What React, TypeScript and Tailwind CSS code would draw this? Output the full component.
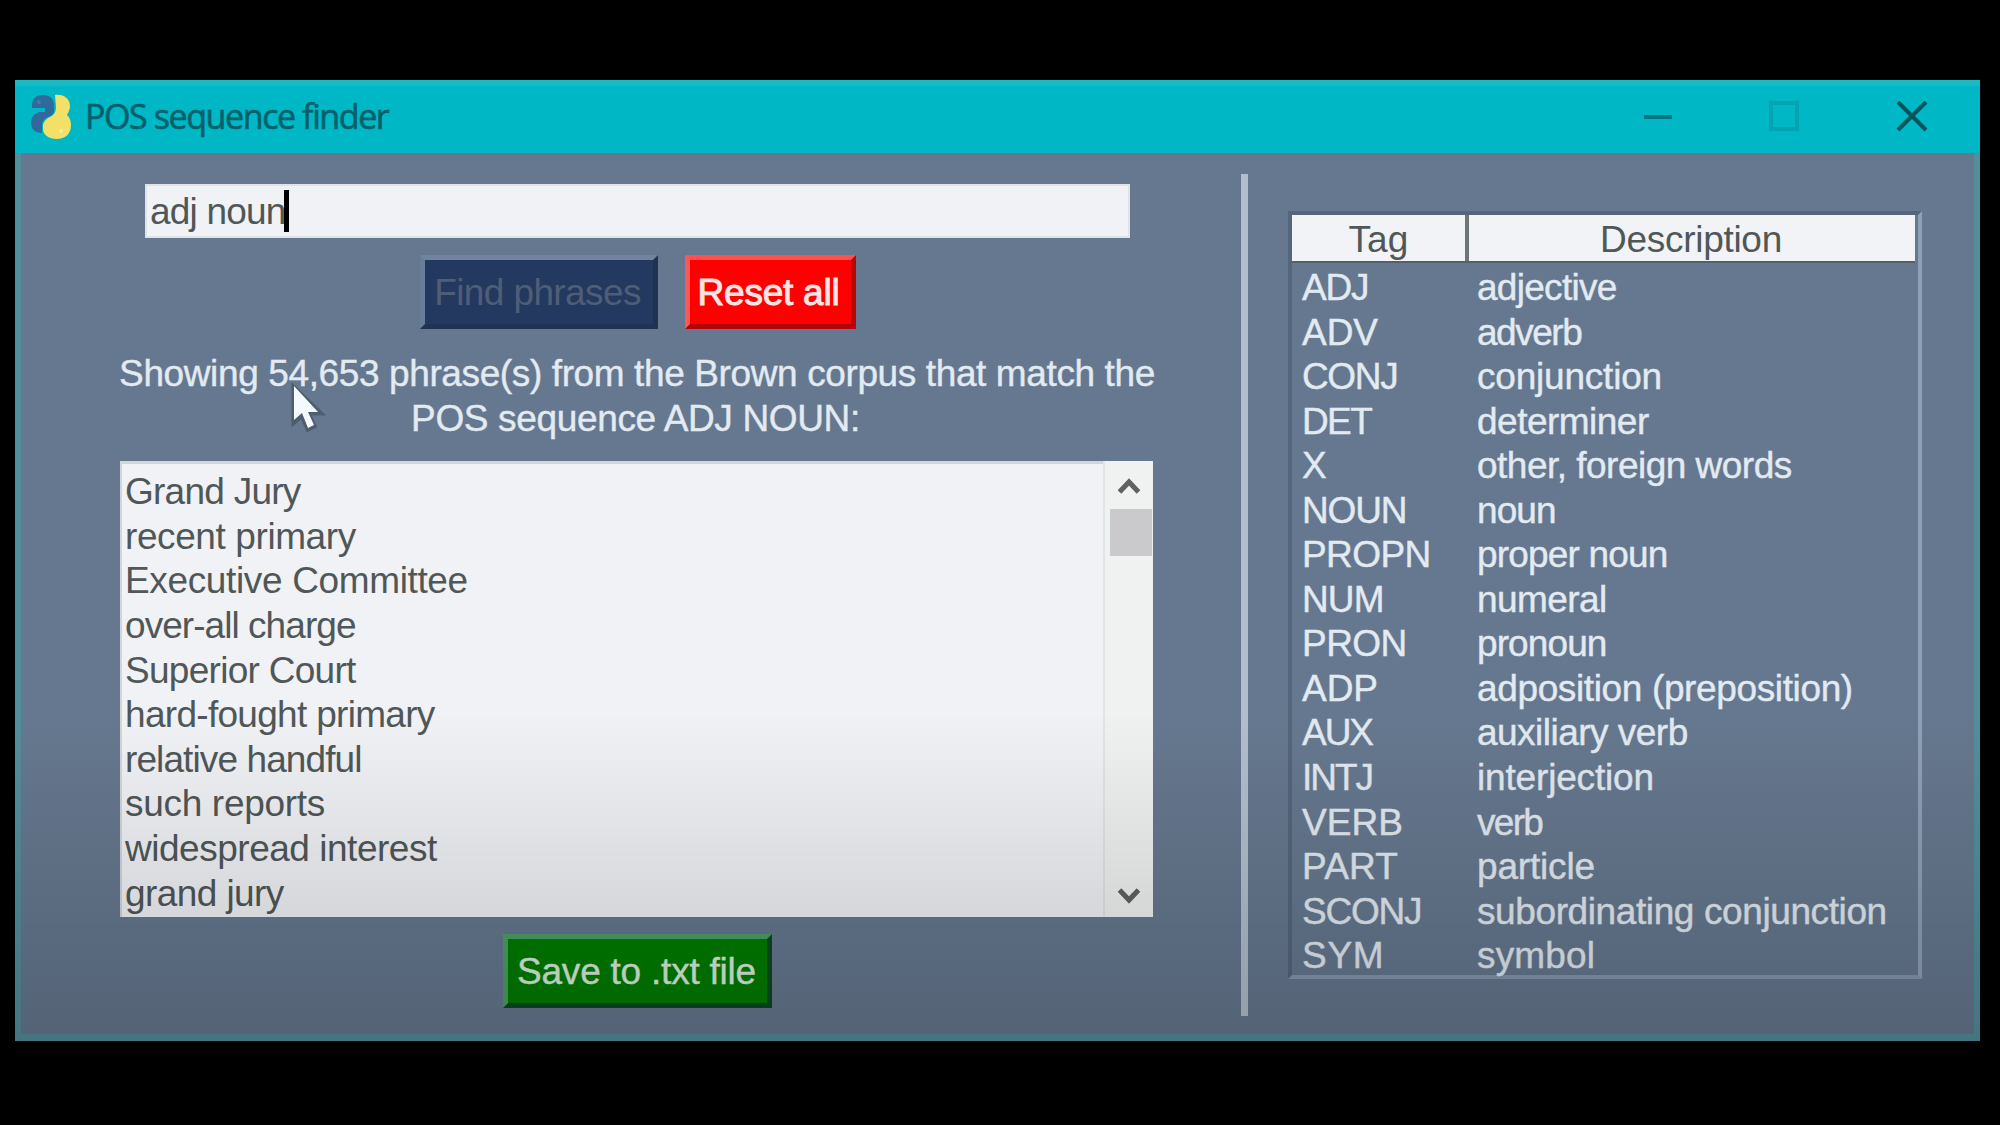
import { useLayoutEffect, useRef, useState } from "react";

type FitProps = { text: string; width: number; className?: string };

// Single line of text tracked in or out so that it fills a given width.
function Fit({ text, width, className = "" }: FitProps) {
  const ref = useRef<HTMLSpanElement>(null);
  const [spacing, setSpacing] = useState(0);
  useLayoutEffect(() => {
    const el = ref.current;
    if (!el) return;
    el.style.letterSpacing = "0px";
    const natural = el.getBoundingClientRect().width;
    const next = text.length > 1 ? (width - natural) / (text.length - 0.5) : 0;
    el.style.letterSpacing = `${next}px`;
    setSpacing(next);
  }, [text, width]);
  return (
    <span ref={ref} className={`inline-block whitespace-pre ${className}`} style={{ letterSpacing: `${spacing}px` }}>
      {text}
    </span>
  );
}

const phrases: [string, number][] = [
  ["Grand Jury", 176],
  ["recent primary", 231],
  ["Executive Committee", 343],
  ["over-all charge", 231],
  ["Superior Court", 231],
  ["hard-fought primary", 310],
  ["relative handful", 237],
  ["such reports", 200],
  ["widespread interest", 312],
  ["grand jury", 159],
];

const tags: [string, number, string, number][] = [
  ["ADJ", 67, "adjective", 140],
  ["ADV", 76, "adverb", 105],
  ["CONJ", 96, "conjunction", 185],
  ["DET", 70, "determiner", 172],
  ["X", 24, "other, foreign words", 315],
  ["NOUN", 105, "noun", 79],
  ["PROPN", 129, "proper noun", 191],
  ["NUM", 82, "numeral", 130],
  ["PRON", 105, "pronoun", 130],
  ["ADP", 76, "adposition (preposition)", 376],
  ["AUX", 71, "auxiliary verb", 211],
  ["INTJ", 71, "interjection", 177],
  ["VERB", 101, "verb", 66],
  ["PART", 96, "particle", 118],
  ["SCONJ", 120, "subordinating conjunction", 410],
  ["SYM", 82, "symbol", 118],
];

function Logo() {
  return (
    <svg className="h-[46px] w-[42px]" viewBox="0 0 42 46">
      <path
        d="M2 11 C2 4 7 1 13 1 C20 1 24 5 24 11 V16 C24 20 21 22 18 23 C14 25 12 27 12 32 V39 C5 39 1 35 1 29 C1 23 4 20 9 18 H15 V14 H2 Z"
        fill="#2f6a9d"
      />
      <path
        d="M25 1 C34 0 40 5 40 12 C40 16 38 19 37 21 C40 24 41 27 41 31 C41 40 35 45 27 45 C19 45 13 41 13 35 V32 C13 28 16 25 20 23 C24 21 26 18 26 13 Z"
        fill="#f3e067"
      />
      <circle cx="9" cy="8" r="2" fill="#3f7eaa" />
      <circle cx="31" cy="37" r="2" fill="#f9ef92" />
    </svg>
  );
}

function Chevron({ up = false }: { up?: boolean }) {
  return (
    <svg className="h-[18px] w-6" viewBox="0 0 24 18" fill="none" stroke="#5f6262" strokeWidth="5">
      <path d={up ? "M2.5 15 L12 5 L21.5 15" : "M2.5 3 L12 13 L21.5 3"} />
    </svg>
  );
}

export default function App() {
  return (
    <div className="h-[1125px] w-[2000px] overflow-hidden bg-black pl-[15px] pt-[80px] font-['Liberation_Sans',Arial,sans-serif] text-[37px] leading-[44.6px]">
      <div className="relative flex h-[961px] w-[1965px] flex-col bg-[#66788f]">
        <header className="flex h-[73px] shrink-0 items-center border-t-[6px] border-[#1cb8c4] bg-[#00b7c6] pb-[6px] pl-[15px]">
          <Logo />
          <Fit
            text="POS sequence finder"
            width={304}
            className="ml-[13px] font-['Open_Sans','Noto_Sans',sans-serif] text-[34px] text-[#04616b] [-webkit-text-stroke:0.6px_#04616b]"
          />
          <div className="ml-auto flex items-center pr-[52px]">
            <svg className="h-8 w-[30px]" viewBox="0 0 30 32">
              <path d="M1 16 H29" stroke="#047681" strokeWidth="4" />
            </svg>
            <svg className="ml-[95px] h-8 w-8" viewBox="0 0 32 32">
              <rect x="3" y="2" width="26" height="26" fill="none" stroke="#04a3b1" strokeWidth="4" />
            </svg>
            <svg className="ml-[96px] h-8 w-8" viewBox="0 0 32 32">
              <path d="M2 1 L30 29 M30 1 L2 29" stroke="#04545e" strokeWidth="4" />
            </svg>
          </div>
        </header>

        <div className="flex grow border-x-[6px] border-b-[7px] border-[#528f9c]">
          <section className="flex w-[1220px] shrink-0 flex-col pl-[99px]">
            <div className="ml-[25px] mt-[31px] flex h-[54px] w-[985px] items-center border-2 border-[#dfe4e9] bg-[#f0f2f6] pl-[3px] text-[#505758]">
              <Fit text="adj noun" width={136} className="pt-[2px]" />
              <span className="-ml-[2px] h-[42px] w-[5px] bg-black" />
            </div>

            <div className="ml-[300px] mt-[17px] flex gap-[27px]">
              <button className="flex h-[74px] w-[238px] items-center justify-center border-[5px] border-b-[#203355] border-l-[#687d98] border-r-[#1f3252] border-t-[#71839f] bg-[#233960] pr-[3px] pt-[2px] text-[#4f5d77]">
                <Fit text="Find phrases" width={207} />
              </button>
              <button className="flex h-[74px] w-[171px] items-center justify-center border-[5px] border-b-[#b00408] border-l-[#ff5658] border-r-[#b90508] border-t-[#ff5052] bg-[#ff0000] pr-[4px] pt-[2px] text-[#ffe4e4] [-webkit-text-stroke:1px_#ffe4e4]">
                <Fit text="Reset all" width={142} />
              </button>
            </div>

            <div className="mt-[23px] flex w-[1034px] flex-col items-center text-[#e2eaf2] [-webkit-text-stroke:0.4px_#e2eaf2]">
              <Fit text="Showing 54,653 phrase(s) from the Brown corpus that match the" width={1036} />
              <Fit text="POS sequence ADJ NOUN:" width={449} className="-ml-[3px]" />
            </div>

            <div className="mt-[20px] flex h-[456px] w-[1033px] bg-[#f0f2f6] text-[#505758]">
              <ul className="w-[983px] border-l-2 border-t-[3px] border-[#cfd6dc] pl-[3px] pt-[6px]">
                {phrases.map(([text, width]) => (
                  <li key={text} className="h-[44.6px]">
                    <Fit text={text} width={width} />
                  </li>
                ))}
              </ul>
              <div className="flex w-[50px] flex-col items-center border-l-2 border-[#e2e5e8] bg-[#f0f2f2] pt-[16px]">
                <Chevron up />
                <div className="ml-[4px] mt-[14px] h-[47px] w-[42px] bg-[#cacacc]" />
                <div className="mb-[12px] mt-auto flex">
                  <Chevron />
                </div>
              </div>
            </div>

            <button className="ml-[383px] mt-[17px] flex h-[74px] w-[269px] items-center justify-center border-[5px] border-b-[#0a4a22] border-l-[#4d9f65] border-r-[#0a4a22] border-t-[#4d9f65] bg-[#007d00] pr-[2px] pt-[3px] text-[#d9efdc] [-webkit-text-stroke:0.4px_#d9efdc]">
              <Fit text="Save to .txt file" width={239} />
            </button>
          </section>

          <div className="mt-[21px] h-[842px] w-[7px] shrink-0 bg-[#b2bfca]" />

          <section className="ml-[40px] mt-[58px] h-[768px] w-[634px] border-4 border-b-[#8496ab] border-l-[#55667b] border-r-[#8fa1b6] border-t-[#55667b] text-[#e2eaf2]">
            <div className="flex h-[48px] w-[623px] border-b-2 border-[#55606b] bg-[#f1f3f6] text-[#505758]">
              <div className="flex w-[177px] justify-center border-r-4 border-[#6e7478] pt-[3px]">
                <Fit text="Tag" width={60} />
              </div>
              <div className="flex grow justify-center pr-[2px] pt-[3px]">
                <Fit text="Description" width={182} />
              </div>
            </div>
            <div className="pt-[3px] [-webkit-text-stroke:0.4px_#e2eaf2]">
              {tags.map(([tag, tagWidth, description, width]) => (
                <div key={tag} className="flex h-[44.55px]">
                  <div className="w-[185px] pl-[10px]">
                    <Fit text={tag} width={tagWidth} />
                  </div>
                  <Fit text={description} width={width} />
                </div>
              ))}
            </div>
          </section>
        </div>

        <div className="pointer-events-none absolute inset-x-0 bottom-0 h-[330px] bg-linear-to-b from-black/0 to-black/18" />

        <svg className="absolute left-[275px] top-[299px] h-[56px] w-[36px]" viewBox="0 0 36 56">
          <path d="M4 9 V43 L12 36 L18 50 L24 47 L18 34 H30 Z" fill="#3f4d5c" opacity="0.6" stroke="#3f4d5c" strokeWidth="5" />
          <path d="M4 7 V41 L12 34 L18 49 L24 46 L18 33 H28 Z" fill="#f4fbff" />
        </svg>
      </div>
    </div>
  );
}
